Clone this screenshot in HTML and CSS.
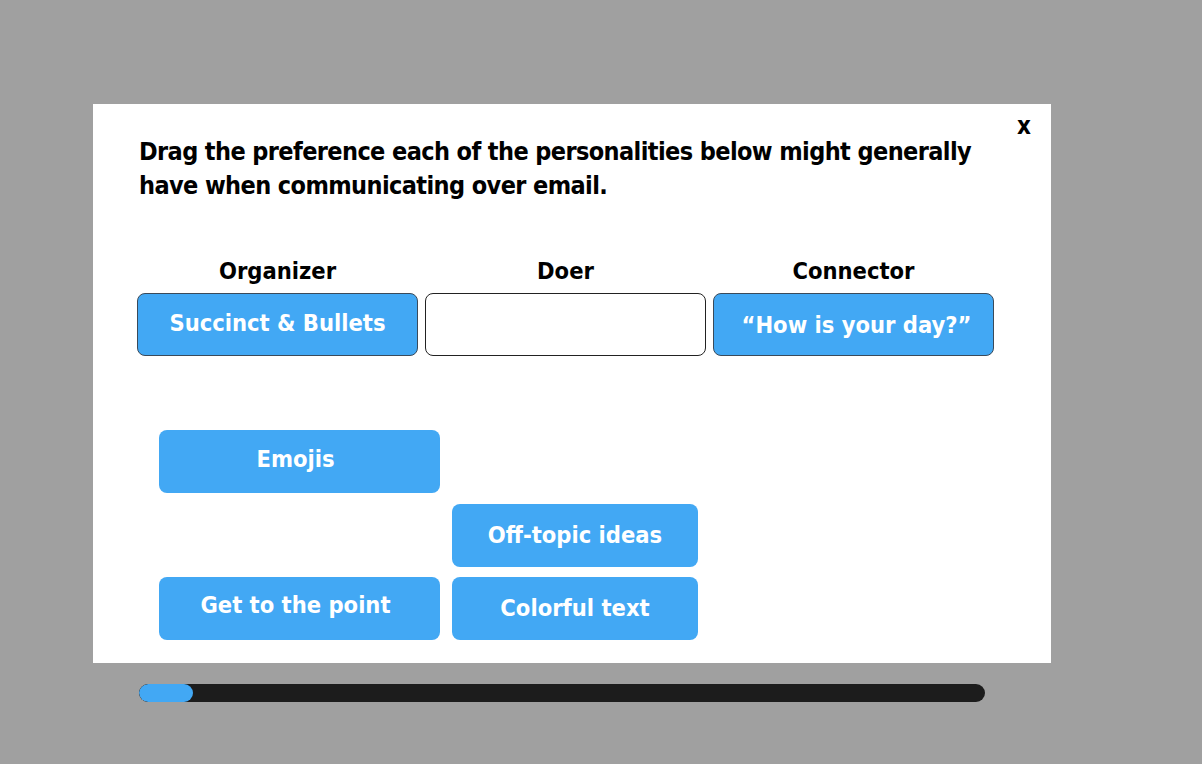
FILE: index.html
```html
<!DOCTYPE html>
<html lang="en">
<head>
<meta charset="utf-8">
<title>Email preferences</title>
<link rel="stylesheet" href="styles.css">
</head>
<body>
<div class="page">
  <div class="modal">
    <button class="close" type="button">x</button>
    <h1 class="title">Drag the preference each of the personalities below might generally<br>have when communicating over email.</h1>
    <div class="targets">
      <div class="target">
        <div class="label">Organizer</div>
        <div class="slot filled">Succinct &amp; Bullets</div>
      </div>
      <div class="target">
        <div class="label">Doer</div>
        <div class="slot"></div>
      </div>
      <div class="target">
        <div class="label">Connector</div>
        <div class="slot filled quote">“How is your day?”</div>
      </div>
    </div>
    <div class="pool">
      <div class="chip emojis">Emojis</div>
      <div class="chip offtopic">Off-topic ideas</div>
      <div class="chip point">Get to the point</div>
      <div class="chip colorful">Colorful text</div>
    </div>
  </div>
  <div class="progress"><div class="progress-fill" style="width: 54px"></div></div>
</div>
</body>
</html>
```
FILE: styles.css
```css
html, body {
  margin: 0;
  padding: 0;
}
body {
  background: #a0a0a0;
  min-height: 764px;
  font-family: "DejaVu Sans Condensed", "Liberation Sans", sans-serif;
  font-weight: bold;
  color: #000;
}
.page {
  padding: 104px 0 0 93px;
}
.modal {
  position: relative;
  box-sizing: border-box;
  width: 958px;
  height: 559px;
  background: #fff;
  padding: 31px 46px 0 46px;
}
.close {
  position: absolute;
  right: 20px;
  top: 8px;
  border: 0;
  background: none;
  font: inherit;
  font-size: 24px;
  color: #000;
  padding: 0;
  cursor: pointer;
}
.title {
  margin: 0;
  font-size: 25px;
  letter-spacing: -0.6px;
  line-height: 34px;
  font-weight: bold;
  white-space: nowrap;
}
.targets {
  display: grid;
  grid-template-columns: 281px 281px 281px;
  column-gap: 7px;
  margin: 53px 0 0 -2px;
}
.target {
  display: flex;
  flex-direction: column;
  align-items: stretch;
}
.label {
  text-align: center;
  font-size: 23.5px;
  line-height: 30px;
  margin-bottom: 7px;
}
.slot {
  box-sizing: border-box;
  height: 63px;
  border: 1px solid #222;
  border-radius: 8px;
  background: #fff;
  display: flex;
  align-items: center;
  justify-content: center;
  font-size: 23.5px;
  color: #fff;
  padding-bottom: 3px;
}
.slot.filled {
  background: #42a8f4;
  border-color: #3a4a5a;
}
.slot.quote {
  padding-left: 6px;
  padding-bottom: 0;
}
.pool {
  display: grid;
  grid-template-columns: 281px 246px;
  grid-template-rows: 63px 64px 63px;
  column-gap: 12px;
  row-gap: 10px;
  margin: 74px 0 0 20px;
}
.chip {
  background: #42a8f4;
  border-radius: 8px;
  color: #fff;
  font-size: 23.5px;
  display: flex;
  align-items: center;
  justify-content: center;
  padding-bottom: 2px;
  box-sizing: border-box;
  height: 63px;
}
.emojis { grid-column: 1; grid-row: 1; padding: 0 8px 6px 0; }
.offtopic { grid-column: 2; grid-row: 2; align-self: end; }
.point { grid-column: 1; grid-row: 3; padding: 0 8px 7px 0; }
.colorful { grid-column: 2; grid-row: 3; }
.progress {
  width: 846px;
  height: 18px;
  margin: 21px 0 0 46px;
  background: #1c1c1c;
  border-radius: 9px;
  overflow: hidden;
}
.progress-fill {
  height: 100%;
  background: #42a8f4;
  border-radius: 9px;
}
```
